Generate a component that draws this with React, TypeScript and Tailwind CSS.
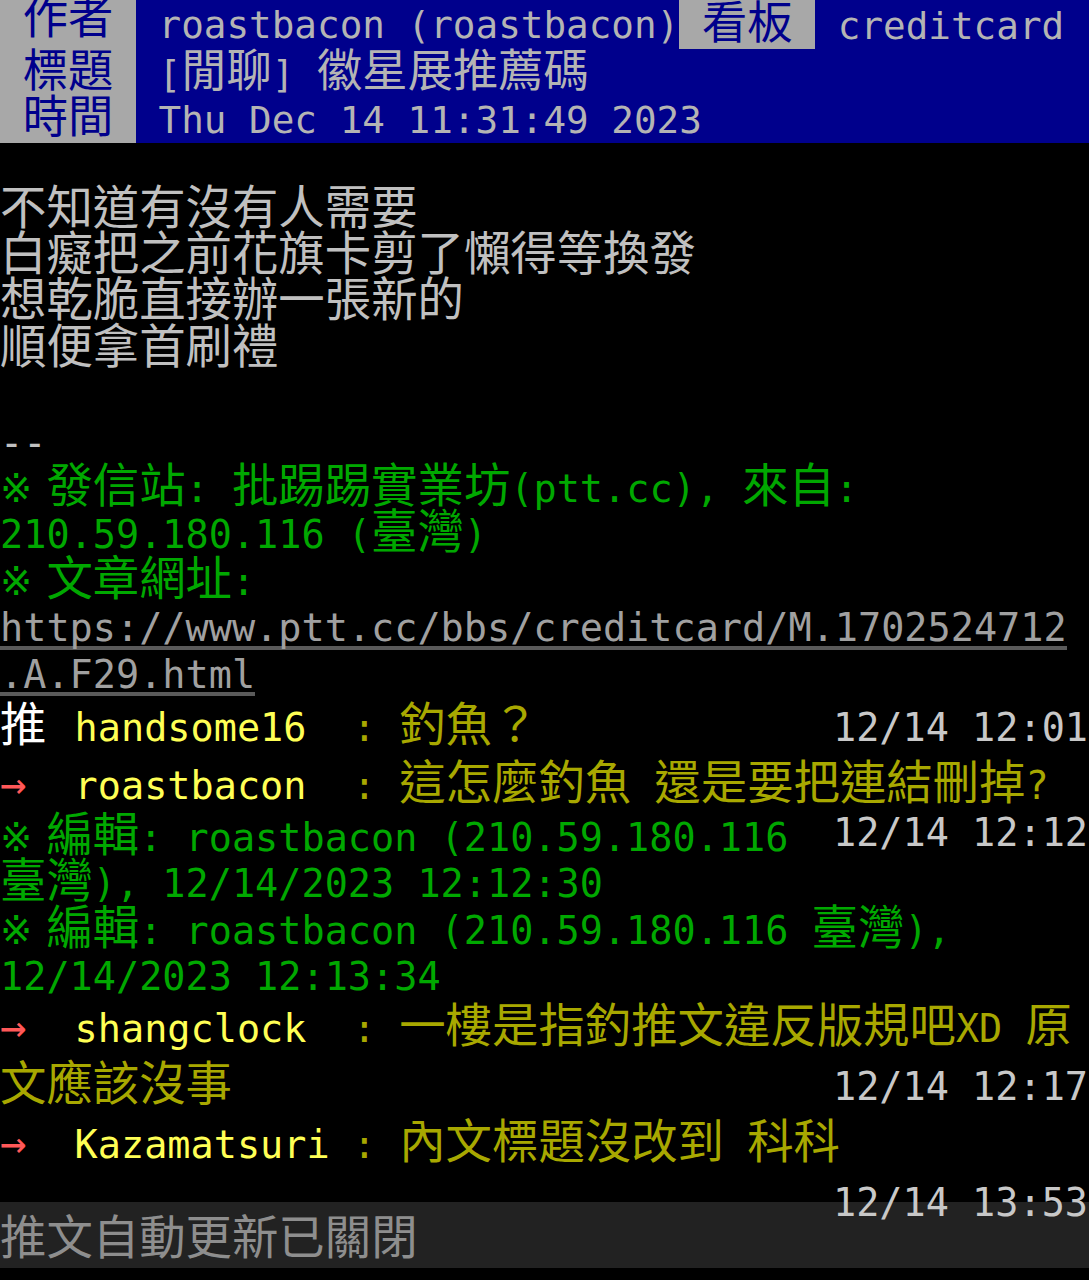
import React from 'react';

type KindName =
  | 'h0'
  | 'h0b'
  | 'h1'
  | 'h2'
  | 'body'
  | 'edit'
  | 'push'
  | 'editDate'
  | 'bar';

interface Kind {
  h: string;
  half: string;
  full: string;
  lat: string;
  cjk: string;
}

// each kind puts the baseline at a fixed offset from the row top
const KINDS: Record<KindName, Kind> = {
  h0: { h: 'h-[49px]', half: 'w-[22.65px]', full: 'w-[45.3px]', lat: 'text-[37.6px] leading-[50px]', cjk: 'text-[45.3px] leading-[28.5px]' },
  h0b: { h: 'h-[49px]', half: 'w-[22.65px]', full: 'w-[45.3px]', lat: 'text-[37.6px] leading-[52px]', cjk: 'text-[45.3px] leading-[38.5px]' },
  h1: { h: 'h-[47px]', half: 'w-[22.65px]', full: 'w-[45.3px]', lat: 'text-[37.6px] leading-[50px]', cjk: 'text-[45.3px] leading-[36.5px]' },
  h2: { h: 'h-[47px]', half: 'w-[22.65px]', full: 'w-[45.3px]', lat: 'text-[37.6px] leading-[48px]', cjk: 'text-[45.3px] leading-[35.5px]' },
  body: { h: 'h-[46.4px]', half: 'w-[23.2px]', full: 'w-[46.4px]', lat: 'text-[38.5px] leading-[49.4px]', cjk: 'text-[46.4px] leading-[35.5px]' },
  edit: { h: 'h-[46.4px]', half: 'w-[23.2px]', full: 'w-[46.4px]', lat: 'text-[38.5px] leading-[52px]', cjk: 'text-[46.4px] leading-[38.1px]' },
  push: { h: 'h-[58px]', half: 'w-[23.2px]', full: 'w-[46.4px]', lat: 'text-[38.5px] leading-[63px]', cjk: 'text-[46.4px] leading-[49.1px]' },
  editDate: { h: 'h-[46.4px]', half: 'w-[23.2px]', full: 'w-[46.4px]', lat: 'text-[38.5px] leading-[42.8px]', cjk: 'text-[46.4px] leading-[29px]' },
  bar: { h: 'h-[66px]', half: 'w-[23.2px]', full: 'w-[46.4px]', lat: 'text-[38.5px] leading-[77.4px]', cjk: 'text-[46.4px] leading-[63.5px]' },
};

const LAT = "font-['DejaVu_Sans_Mono',monospace]";
const SYM = "font-['DejaVu_Sans','Noto_Sans_CJK_TC',sans-serif]";
const CJK = "font-['Noto_Sans_CJK_TC','Noto_Sans_CJK_JP',sans-serif]";
// the push arrow is drawn larger than the body text
const ARROW = 'text-[44px] leading-[59.2px]';

const GRAY = 'text-[#c0c0c0]';
const HEAD = 'text-[#b4b4b4]';
const LABEL = 'text-[#00008c] bg-[#a8a8a8]';
const GREEN = 'text-[#00a800]';
const NAME = 'text-[#ffff55]';
const SAY = 'text-[#a8a800]';
const RED = 'text-[#ff5858]';
const WHITE = 'text-white';
const DATE = 'text-[#c8c8c8]';
const URL = 'text-[#a0a0a0] border-b-[4px] border-[#5a5a5a]';

interface Seg {
  t: string;
  c: string;
  k?: KindName;
}

interface Line {
  k: KindName;
  segs: Seg[];
  right?: Seg[];
  bg?: string;
}

const isWide = (ch: string) => {
  const n = ch.codePointAt(0) ?? 0;
  return (
    (n >= 0x2e80 && n <= 0xa4cf) ||
    (n >= 0xac00 && n <= 0xd7a3) ||
    (n >= 0xf900 && n <= 0xfaff) ||
    (n >= 0xfe30 && n <= 0xfe4f) ||
    (n >= 0xff00 && n <= 0xff60) ||
    (n >= 0xffe0 && n <= 0xffe6)
  );
};

const Cells: React.FC<{ text: string; k: Kind }> = ({ text, k }) => (
  <>
    {Array.from(text).map((ch, i) => {
      if (ch === '→') {
        return (
          <div key={i} className={`${k.full} ${ARROW} ${LAT} shrink-0 text-left`}>
            {ch}
          </div>
        );
      }
      if (ch === '※') {
        return (
          <div key={i} className={`${k.half} ${k.lat} ${SYM} shrink-0 text-left`}>
            {ch}
          </div>
        );
      }
      if (isWide(ch)) {
        return (
          <div key={i} className={`${k.full} ${k.cjk} ${CJK} shrink-0 text-center`}>
            {ch}
          </div>
        );
      }
      return (
        <div key={i} className={`${k.half} ${k.lat} ${LAT} shrink-0 whitespace-pre text-center`}>
          {ch}
        </div>
      );
    })}
  </>
);

const Segs: React.FC<{ segs: Seg[]; k: KindName }> = ({ segs, k }) => (
  <div className="flex h-full items-start">
    {segs.map((s, i) => {
      const kind = KINDS[s.k ?? k];
      return (
        <div key={i} className={`flex shrink-0 items-start ${kind.h} ${s.c}`}>
          <Cells text={s.t} k={kind} />
        </div>
      );
    })}
  </div>
);

const Row: React.FC<{ line: Line }> = ({ line }) => (
  <div className={`flex w-full items-start justify-between ${KINDS[line.k].h} ${line.bg ?? ''}`}>
    <Segs segs={line.segs} k={line.k} />
    {line.right && (
      <div className="pr-[1px]">
        <Segs segs={line.right} k={line.k} />
      </div>
    )}
  </div>
);

const HEADER: Line[] = [
  {
    k: 'h0',
    segs: [
      { t: ' 作者 ', c: LABEL },
      { t: ' roastbacon (roastbacon)', c: HEAD },
      { t: ' 看板 ', c: LABEL, k: 'h0b' },
      { t: ' creditcard', c: HEAD, k: 'h0b' },
    ],
  },
  {
    k: 'h1',
    segs: [
      { t: ' 標題 ', c: LABEL },
      { t: ' [閒聊] 徽星展推薦碼', c: HEAD },
    ],
  },
  {
    k: 'h2',
    segs: [
      { t: ' 時間 ', c: LABEL },
      { t: ' Thu Dec 14 11:31:49 2023', c: HEAD },
    ],
  },
];

const body = (t: string, c = GRAY): Line => ({ k: 'body', segs: [{ t, c }] });
const edit = (t: string): Line => ({ k: 'edit', segs: [{ t, c: GREEN }] });

const push = (mark: string, markColor: string, id: string, text: string, date?: string): Line => ({
  k: 'push',
  segs: [
    { t: `${mark} `, c: markColor },
    { t: id.padEnd(12, ' '), c: `${NAME} pl-[5px]` },
    { t: `: ${text}`, c: SAY },
  ],
  right: date ? [{ t: date, c: DATE }] : undefined,
});

const CONTENT: Line[] = [
  body('不知道有沒有人需要'),
  body('白癡把之前花旗卡剪了懶得等換發'),
  body('想乾脆直接辦一張新的'),
  body('順便拿首刷禮'),
  body(''),
  body('--'),
  body('※ 發信站: 批踢踢實業坊(ptt.cc), 來自:', GREEN),
  body('210.59.180.116 (臺灣)', GREEN),
  body('※ 文章網址:', GREEN),
  body('https://www.ptt.cc/bbs/creditcard/M.1702524712', URL),
  body('.A.F29.html', URL),
  push('推', WHITE, 'handsome16', '釣魚？', '12/14 12:01'),
  push('→', RED, 'roastbacon', '這怎麼釣魚 還是要把連結刪掉?'),
  {
    k: 'edit',
    segs: [{ t: '※ 編輯: roastbacon (210.59.180.116', c: GREEN }],
    right: [{ t: '12/14 12:12', c: DATE, k: 'editDate' }],
  },
  edit('臺灣), 12/14/2023 12:12:30'),
  edit('※ 編輯: roastbacon (210.59.180.116 臺灣),'),
  edit('12/14/2023 12:13:34'),
  push('→', RED, 'shangclock', '一樓是指釣推文違反版規吧XD 原'),
  { k: 'push', segs: [{ t: '文應該沒事', c: SAY }], right: [{ t: '12/14 12:17', c: DATE }] },
  push('→', RED, 'Kazamatsuri', '內文標題沒改到 科科'),
  { k: 'push', segs: [], right: [{ t: '12/14 13:53', c: DATE }] },
];

export default function App() {
  return (
    <div className="relative min-h-[1280px] w-full overflow-hidden bg-black">
      {/* status bar sits under the last push date */}
      <div className="absolute left-0 top-[1202px] z-0 h-[66px] w-full bg-[#222222]">
        <Row line={{ k: 'bar', segs: [{ t: '推文自動更新已關閉', c: 'text-[#8e8e8e]' }] }} />
      </div>

      <div className="relative z-10">
        <div className="bg-[#00008c]">
          {HEADER.map((line, i) => (
            <Row key={i} line={line} />
          ))}
        </div>
        <div className="h-[42.6px]" />
        {CONTENT.map((line, i) => (
          <Row key={i} line={line} />
        ))}
      </div>
    </div>
  );
}
